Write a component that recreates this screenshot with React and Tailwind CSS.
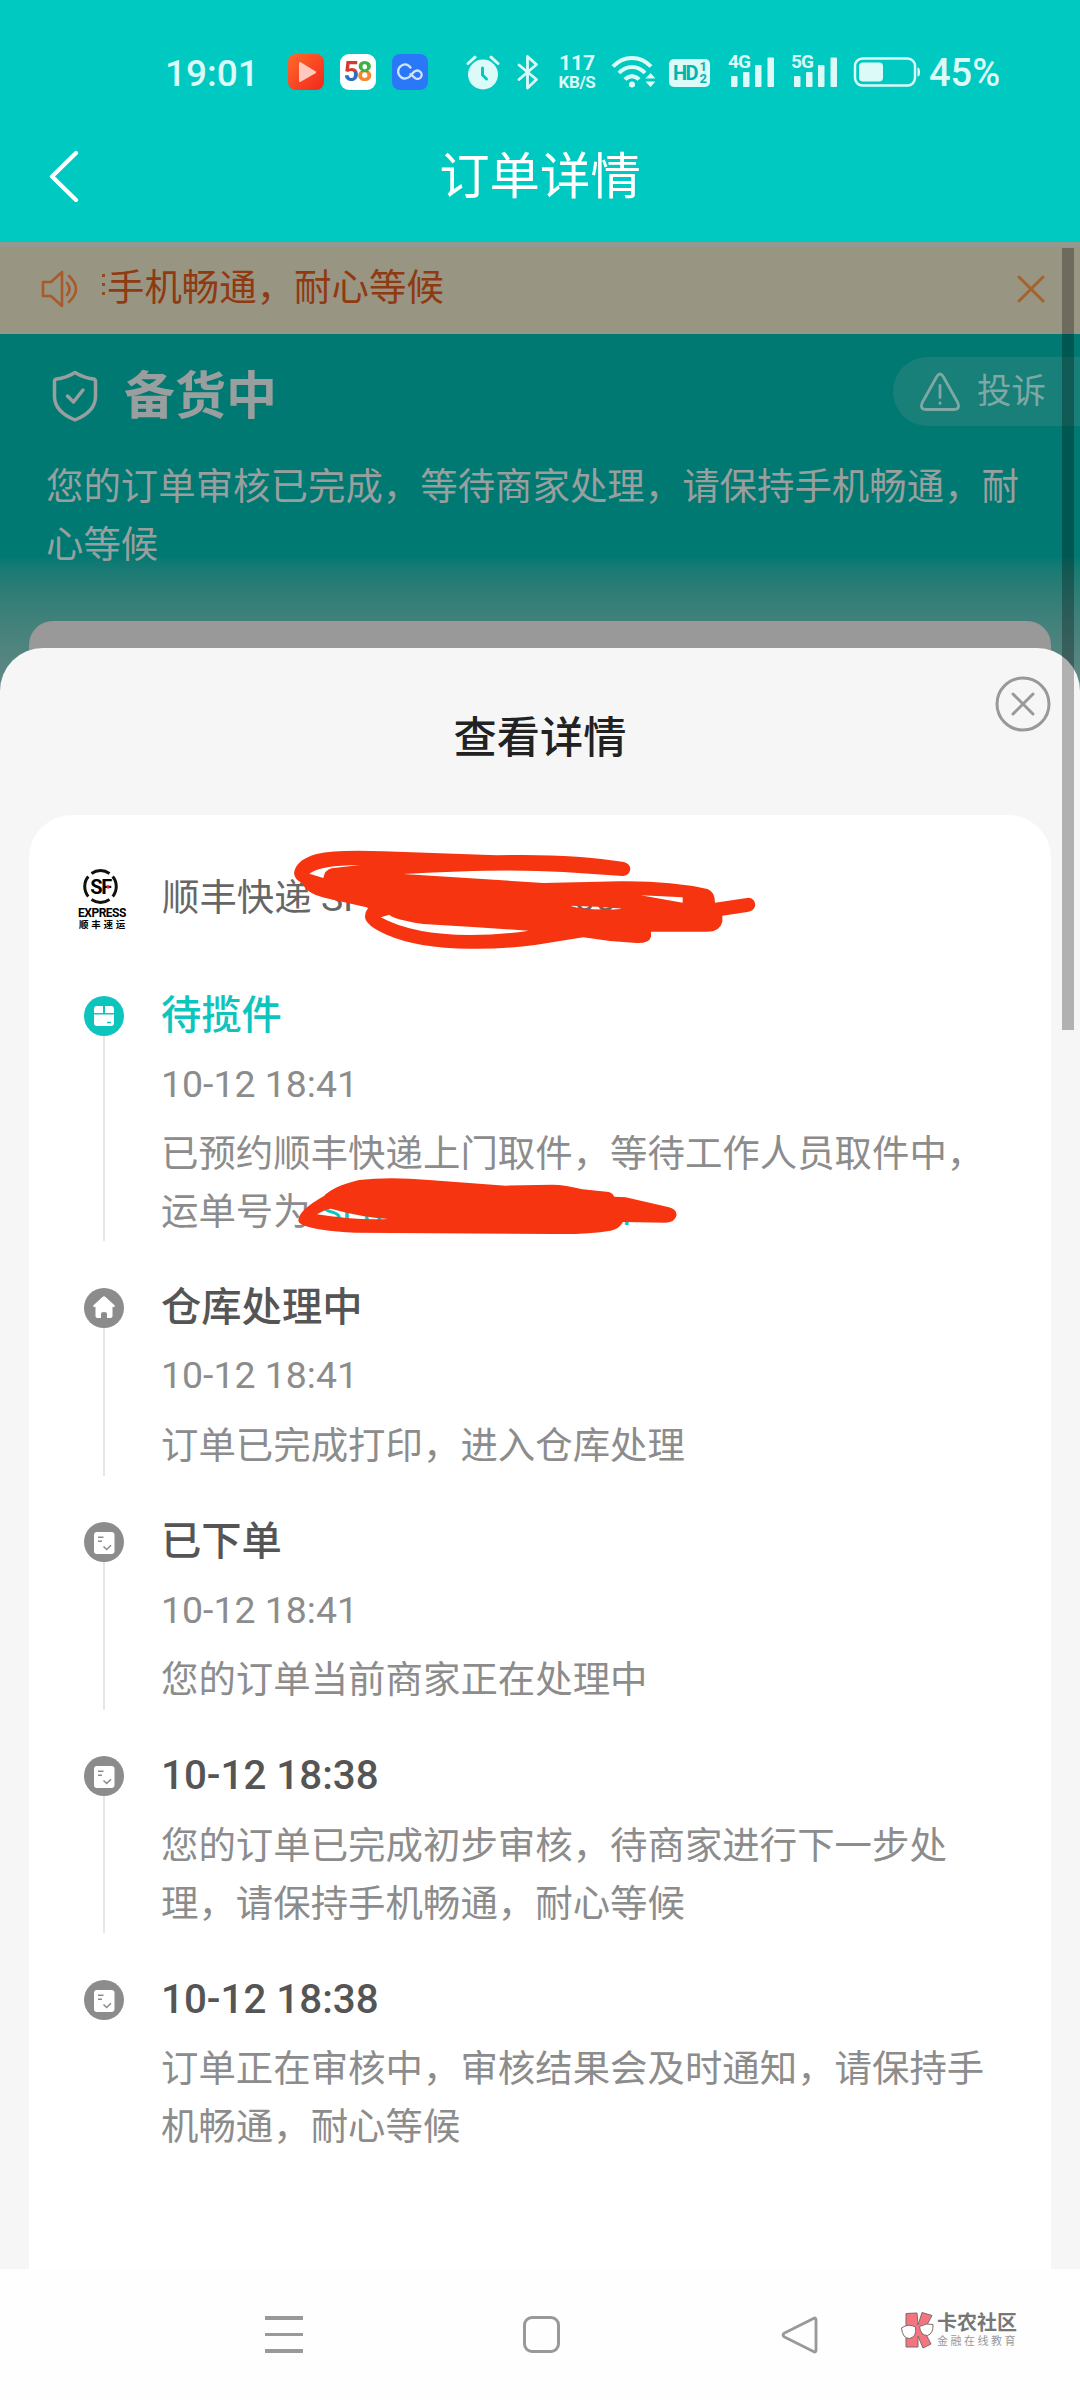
const STEPS = [
    {
        icon: "box",
        title: "待揽件",
        active: true,
        time: "10-12 18:41",
        lines: ["已预约顺丰快递上门取件，等待工作人员取件中，", "运单号为"],
        number: "SF0000000000001",
    },
    {
        icon: "home",
        title: "仓库处理中",
        time: "10-12 18:41",
        lines: ["订单已完成打印，进入仓库处理"],
    },
    {
        icon: "order",
        title: "已下单",
        time: "10-12 18:41",
        lines: ["您的订单当前商家正在处理中"],
    },
    {
        icon: "order",
        title: "10-12 18:38",
        lines: ["您的订单已完成初步审核，待商家进行下一步处", "理，请保持手机畅通，耐心等候"],
    },
    {
        icon: "order",
        title: "10-12 18:38",
        lines: ["订单正在审核中，审核结果会及时通知，请保持手", "机畅通，耐心等候"],
    },
];

const Signal = ({ label }) => (
    <div className="relative h-[36px] w-[46px] shrink-0">
        <span className="absolute left-0 top-[-3px] text-[19px] leading-[22px] font-bold tracking-[-1px]">
            {label}
        </span>
        <svg viewBox="0 0 46 36" className="absolute inset-0 h-full w-full" fill="currentColor">
            <rect x="3" y="22" width="6.5" height="11" rx="1" />
            <rect x="15" y="18" width="6.5" height="15" rx="1" />
            <rect x="27" y="11" width="6.5" height="22" rx="1" />
            <rect x="39.5" y="3.5" width="6.5" height="29.5" rx="1" />
        </svg>
    </div>
);

const StatusBar = () => (
    <div className="flex h-[144px] items-center pl-[165px] text-[#dcfaf8]">
        <span className="w-[123px] pt-[2px] text-[37px] font-medium leading-none">19:01</span>
        <svg viewBox="0 0 36 36" className="h-9 w-9">
            <defs>
                <linearGradient id="play" x1="0" y1="0" x2="1" y2="1">
                    <stop offset="0" stopColor="#ff6a2a" />
                    <stop offset="1" stopColor="#f3261c" />
                </linearGradient>
            </defs>
            <rect width="36" height="36" rx="8" fill="url(#play)" />
            <path d="M11 9.2v17.6q0 1.8 1.7.9L27.4 19.2q1.5-1 0-2L12.7 8.3q-1.7-.9-1.7.9z" fill="#ffc9bd" />
        </svg>
        <div className="ml-4 flex h-9 w-9 items-center justify-center rounded-[9px] bg-white text-[27px] font-bold leading-none tracking-[-2px]">
            <span className="bg-linear-to-b from-[#d8392f] from-50% to-[#2a6fc4] to-50% bg-clip-text pr-[2px] -mr-[2px] text-transparent">5</span>
            <span className="bg-linear-to-b from-[#3fb043] from-50% to-[#f08a2c] to-50% bg-clip-text pr-[2px] text-transparent">8</span>
        </div>
        <svg viewBox="0 0 36 36" className="ml-4 h-9 w-9">
            <rect width="36" height="36" rx="8" fill="#2a78f8" />
            <path
                d="M18.5 13.5C16 10.2 12.5 10 10 11.3a7 7 0 0 0-1 11.9c3 2.2 7.3 1.5 9.8-1.7l2-2.5c2-2.6 5.2-3.4 7.3-1.3a4 4 0 0 1-5 6.4l-4.6-4"
                fill="none"
                stroke="#cfe3ff"
                strokeWidth="2.3"
                strokeLinecap="round"
            />
        </svg>
        <svg viewBox="0 0 34 36" className="ml-[38px] h-9 w-[34px]">
            <circle cx="17" cy="20.5" r="15" fill="currentColor" />
            <path d="M2 9.5L9 3.2M32 9.5l-7-6.3" stroke="currentColor" strokeWidth="3" strokeLinecap="round" />
            <path d="M16.5 14v7l4 4" fill="none" stroke="#00c9c1" strokeWidth="3" strokeLinecap="round" />
        </svg>
        <svg viewBox="0 0 22 36" className="ml-[17px] h-9 w-[22px]" fill="none" stroke="currentColor" strokeWidth="2.8" strokeLinejoin="round" strokeLinecap="round">
            <path d="M2 11l17.5 14.5L10.5 34V2.5L19.5 10.5 2 25.5" />
        </svg>
        <div className="ml-[15px] flex w-[46px] flex-col items-center">
            <span className="text-[21px] font-bold leading-[19px]">117</span>
            <span className="text-[17px] font-bold leading-[18px] tracking-[-0.4px]">KB/S</span>
        </div>
        <svg viewBox="0 0 44 36" className="ml-[11px] h-9 w-[44px]" fill="none" stroke="currentColor" strokeWidth="4">
            <path d="M2 12.5C12.5 1 29.5 1 40 12.5" />
            <path d="M8 19c7.5-8 18.5-8 26 0" />
            <path d="M14 25.5c4-4.5 10-4.5 14 0" />
            <circle cx="21" cy="30.5" r="3" fill="currentColor" stroke="none" />
            <path d="M34.5 24.5l5-5.5 5 5.5zM34.5 27.5l5 5.5 5-5.5z" fill="currentColor" stroke="none" />
        </svg>
        <div className="relative ml-[14px] mt-[2px] h-[28px] w-[41px] rounded-[5px] bg-[#dcfaf8] text-[#00b5ae]">
            <span className="absolute left-[4px] top-[3px] text-[20px] font-bold leading-[22px] tracking-[-1.5px]">HD</span>
            <span className="absolute right-[3px] top-[2px] text-[13px] font-bold leading-[12px]">1</span>
            <span className="absolute right-[3px] top-[14px] text-[13px] font-bold leading-[12px]">2</span>
        </div>
        <div className="ml-[18px] flex">
            <Signal label="4G" />
        </div>
        <div className="ml-[17px] flex">
            <Signal label="5G" />
        </div>
        <svg viewBox="0 0 68 32" className="ml-[16px] h-8 w-[68px]">
            <rect x="2" y="2.5" width="60" height="27" rx="7.5" fill="none" stroke="currentColor" strokeWidth="2.5" />
            <rect x="6" y="6.5" width="24" height="19" rx="4" fill="currentColor" />
            <path d="M64.5 11.5q2.5 0 2.5 4.5t-2.5 4.5z" fill="currentColor" />
        </svg>
        <span className="ml-[8px] pt-[2px] text-[38px] font-medium leading-none">45%</span>
    </div>
);

const Header = () => (
    <header className="h-[242px] shrink-0 bg-[#00c9c1]">
        <StatusBar />
        <div className="flex h-[64px] items-center pl-[48px] pr-[80px] text-white">
            <svg viewBox="0 0 32 52" className="h-[52px] w-8" fill="none" stroke="currentColor" strokeWidth="4.2" strokeLinecap="round" strokeLinejoin="round">
                <path d="M28 3L4 26.5 28 50" />
            </svg>
            <h1 className="flex-1 pt-[2px] text-center text-[50.4px] leading-none">订单详情</h1>
        </div>
    </header>
);

const Notice = () => (
    <div className="flex h-[92px] items-center border-t-[5px] border-[#94998f] bg-[#999583] pb-[4px] pl-[41px] pr-[35px]">
        <svg viewBox="0 0 38 38" className="h-[38px] w-[38px]" fill="none" stroke="#a85a2b" strokeWidth="2.6" strokeLinecap="round" strokeLinejoin="round">
            <path d="M2 12v14h8l11 10V2L10 12z" />
            <path d="M26 13q5 6 0 12M28 6q14 13 0 26" />
        </svg>
        <div className="ml-[23px] flex w-[5px] flex-col gap-[6px] pb-[8px]">
            <i className="h-[3px] w-[3px] bg-[#8f4a22]" />
            <i className="h-[3px] w-[3px] bg-[#8f4a22]" />
            <i className="h-[3px] w-[3px] bg-[#8f4a22]" />
        </div>
        <p className="flex-1 pt-px text-[37.44px] leading-none text-[#8f3a10]">手机畅通，耐心等候</p>
        <svg viewBox="0 0 28 28" className="h-7 w-7" stroke="#a5622c" strokeWidth="3" strokeLinecap="round">
            <path d="M2 2l24 24M26 2L2 26" />
        </svg>
    </div>
);

const Hero = () => (
    <div className="h-[500px] bg-linear-to-b from-[#007972] from-[222px] to-[#949494] to-[470px] text-[#999f9e]">
        <div className="flex items-start justify-between pl-[52px] pt-[23px]">
            <div className="flex items-center pt-[3px]">
                <svg viewBox="0 0 46 52" className="h-[52px] w-[46px]" fill="none" stroke="currentColor" strokeWidth="3.5" strokeLinecap="round" strokeLinejoin="round">
                    <path d="M23 2.5q9 5.5 18.5 6.5 2 .4 2 2.5v15q0 15-20.5 23.5Q2.5 41.5 2.5 26.5v-15Q2.5 9.4 4.5 9 14 8 23 2.5z" />
                    <path d="M15.5 26l6 6L31 20" />
                </svg>
                <h2 className="ml-[26px] pt-[2px] text-[51px] font-bold leading-[70px]">备货中</h2>
            </div>
            <div className="flex h-[69px] w-[187px] items-center rounded-l-full bg-[#187f79] pl-[27px] text-[#7fa8a5]">
                <svg viewBox="0 0 40 40" className="h-10 w-10" fill="none" stroke="currentColor" strokeWidth="2.8" strokeLinecap="round" strokeLinejoin="round">
                    <path d="M16.8 4.5q3.2-5 6.4 0l14.5 26q2.8 7-3.7 7H6q-6.5 0-3.7-7z" />
                    <path d="M20 13.5v12M20 31v.4" />
                </svg>
                <span className="ml-[17px] text-[34.5px] leading-none">投诉</span>
            </div>
        </div>
        <p className="pl-[46px] pt-[26px] text-[37.44px] leading-[58px]">
            您的订单审核已完成，等待商家处理，请保持手机畅通，耐
            <br />
            心等候
        </p>
        <div className="mx-[29px] mt-[47px] h-[100px] rounded-[24px] bg-[#999999]" />
    </div>
);

const StepIcon = ({ name, active }) => (
    <svg viewBox="0 0 40 40" className={`h-10 w-10 shrink-0 ${active ? "text-[#0dc5bd]" : "text-[#8c8c8c]"}`}>
        <circle cx="20" cy="20" r="20" fill="currentColor" />
        {name === "box" && (
            <>
                <path d="M13 10h6v7h-9v-4q0-3 3-3zM21 10h6q3 0 3 3v4h-9zM10 18.5h20V27q0 3-3 3H13q-3 0-3-3z" fill="#fff" />
                <path d="M23 26.5h4" stroke="currentColor" strokeWidth="1.5" />
            </>
        )}
        {name === "home" && (
            <path
                d="M18.5 9q1.5-1.3 3 0l9 8.3q1 1.7-1 1.7h-1v9q0 2-2 2h-3.500v-4q0-2-3-2t-3 2v4h-3.500q-2 0-2-2v-9h-1q-2 0-1-1.700z"
                fill="#fff"
            />
        )}
        {name === "order" && (
            <>
                <rect x="10" y="10" width="20.5" height="22" rx="3" fill="#fff" />
                <path d="M14 15.3h5.5M14 19.3h4M19.5 24.5l3.2 3 4.3-4.3" fill="none" stroke="currentColor" strokeWidth="1.6" />
            </>
        )}
    </svg>
);

const Step = ({ step, last }) => (
    <li className="flex pb-[37.5px]">
        <div className="flex w-10 flex-col items-center pt-[9px]">
            <StepIcon name={step.icon} active={step.active} />
            {!last && <div className="w-[2px] flex-1 bg-[#e6e6e6]" />}
        </div>
        <div className="ml-[37px] text-[37.44px] leading-[57.6px] text-[#8c8c8c]">
            <h4 className={`text-[40.3px] font-medium ${step.active ? "text-[#0dc5bd]" : "text-[#555555]"}`}>
                {step.title}
            </h4>
            {step.time && <div className="mt-[11px]">{step.time}</div>}
            <div className="mt-[13px]">
                {step.lines.map((line, i) => (
                    <p key={line} className="whitespace-nowrap">
                        {line}
                        {step.number && i === step.lines.length - 1 && (
                            <span className="relative ml-[9px] text-[#0dc5bd]">
                                {step.number}
                                <svg viewBox="0 0 1200 270" className="absolute left-[-31px] top-[-30px] h-[90px] w-[400px]">
                                    <path
                                        d="M28 180Q30 150 105 108Q130 80 210 60Q300 50 420 60L650 77L790 74Q830 74 880 88L960 96Q972 100 976 110L1010 112L1140 142Q1163 148 1163 165Q1158 187 1130 188L1002 186Q990 208 965 212Q900 223 800 222L200 218Q80 212 40 194Q28 190 28 180ZM84 163Q108 148 125 146Q220 172 300 177Q200 182 84 163Z"
                                        fill="#f73410"
                                        fillRule="evenodd"
                                    />
                                </svg>
                            </span>
                        )}
                    </p>
                ))}
            </div>
        </div>
    </li>
);

const SfLogo = () => (
    <div className="-ml-px flex w-[48px] flex-col items-center text-black">
        <div className="relative mr-[3px] flex h-[35px] w-[35px] items-center justify-center">
            <svg viewBox="0 0 35 35" className="absolute inset-0 h-full w-full" fill="none" stroke="#111" strokeWidth="3">
                <path d="M8.5 4.4a15.8 15.8 0 0 1 18 0M29.7 7.5a15.8 15.8 0 0 1 0 20M26.5 30.6a15.8 15.8 0 0 1-18 0M5.3 27.5a15.8 15.8 0 0 1 0-20" />
                <circle cx="25" cy="18" r="1.7" fill="#e02020" stroke="none" />
            </svg>
            <span className="text-[20px] font-bold leading-none tracking-[-1.5px]">SF</span>
        </div>
        <span className="mt-[3px] text-[12px] font-bold leading-[12px] tracking-[-0.5px]">EXPRESS</span>
        <span className="mr-[-3px] whitespace-nowrap text-[9.5px] font-bold leading-[11px] tracking-[2.8px]">顺丰速运</span>
    </div>
);

const Sheet = () => (
    <section className="absolute inset-x-0 bottom-0 top-[406px] flex flex-col rounded-t-[43px] bg-[#f6f6f6]">
        <h3 className="pt-[62px] text-center text-[43.2px] font-medium leading-[58px] text-[#222222]">查看详情</h3>
        <button className="absolute right-[29px] top-[28px]">
            <svg viewBox="0 0 56 56" className="h-14 w-14" fill="none" stroke="#999" strokeWidth="3" strokeLinecap="round">
                <circle cx="28" cy="28" r="26" />
                <path d="M18 18l20 20M38 18L18 38" />
            </svg>
        </button>
        <div className="mx-[29px] mt-[47px] flex-1 rounded-t-[43px] bg-white pl-[50px]">
            <div className="flex pt-[54px]">
                <SfLogo />
                <div className="relative ml-[36px] text-[37.44px] leading-[58px] text-[#666666]">
                    顺丰快递 SF0000000000000
                    <svg viewBox="0 0 1500 420" className="absolute left-[108px] top-[-49px] h-[140px] w-[500px]">
                        <path
                            d="M72 160Q76 120 140 102Q200 88 340 94L680 106Q900 100 1062 126Q1081 132 1081 148Q1078 168 1058 168L880 156Q700 144 400 162L820 189L1050 184Q1200 182 1312 207Q1334 214 1335 248L1436 233Q1456 236 1456 256Q1452 274 1432 276L1357 287V305Q1350 335 1312 335H1143V350Q1138 370 1100 369Q1020 366 940 352L800 374Q700 388 600 386Q440 384 350 344Q286 316 285 290Q286 272 296 263L180 237Q110 224 97 190Q74 180 72 160ZM118 161Q150 136 270 135L185 145Q164 150 160 174ZM332 292L358 284Q370 298 460 312L620 322L776 332Q700 344 600 345Q430 345 332 292ZM1112 226L1238 232V248ZM898 257Q980 258 1062 266Q960 274 898 257Z"
                            fill="#f73410"
                            fillRule="evenodd"
                        />
                    </svg>
                </div>
            </div>
            <ol className="mt-[57px] pl-[5px]">
                {STEPS.map((step, i) => (
                    <Step key={i} step={step} last={i === STEPS.length - 1} />
                ))}
            </ol>
        </div>
    </section>
);

const NavBar = () => (
    <nav className="flex h-[131px] shrink-0 items-center bg-[#fefefe] pl-[265px]">
        <div className="flex w-[38px] flex-col gap-[13px]">
            <i className="h-[3.5px] bg-[#999999]" />
            <i className="h-[3.5px] bg-[#999999]" />
            <i className="h-[3.5px] bg-[#999999]" />
        </div>
        <div className="ml-[220px] h-[37px] w-[37px] rounded-[9px] border-[3px] border-[#999999]" />
        <svg viewBox="0 0 38 38" className="ml-[220px] h-[38px] w-[38px]" fill="none" stroke="#999" strokeWidth="2.8" strokeLinejoin="round">
            <path d="M36 4v30q0 3-2.5 1.5L4.5 21q-3-2 0-4L33.5 2.5Q36 1 36 4z" />
        </svg>
        <div className="ml-[82px] mt-[-9px] flex items-center">
            <svg viewBox="0 0 36 38" className="h-[38px] w-9" stroke="#7d6a6c" strokeWidth="1">
                <path d="M6 2.5L17 2l1 12 4-12.5 10 3-8 15 7 13.5-8 4-5-12v11L6 36z" fill="#f4747f" />
                <path d="M1.5 17q7-5 14-1 1.5 10-6 11.5-7 0-8-10.5zM19.5 15.5q7-4 13.5-2 .5 9-5.500 11-7 0-8-9z" fill="#fff" />
            </svg>
            <div className="ml-[1px] flex flex-col">
                <span className="text-[20px] font-bold leading-[22px] text-[#777777]">卡农社区</span>
                <span className="mt-[1px] text-[11px] leading-[13px] tracking-[2.5px] text-[#999999]">金融在线教育</span>
            </div>
        </div>
    </nav>
);

export default function App() {
    return (
        <div className="flex h-[2400px] w-[1080px] flex-col overflow-hidden bg-white font-[Roboto,'Noto_Sans_CJK_SC',sans-serif]">
            <Header />
            <main className="relative flex-1 overflow-hidden">
                <Notice />
                <Hero />
                <Sheet />
                <div className="absolute right-[6px] top-[6px] h-[782px] w-[12px] bg-black/28" />
            </main>
            <NavBar />
        </div>
    );
}
